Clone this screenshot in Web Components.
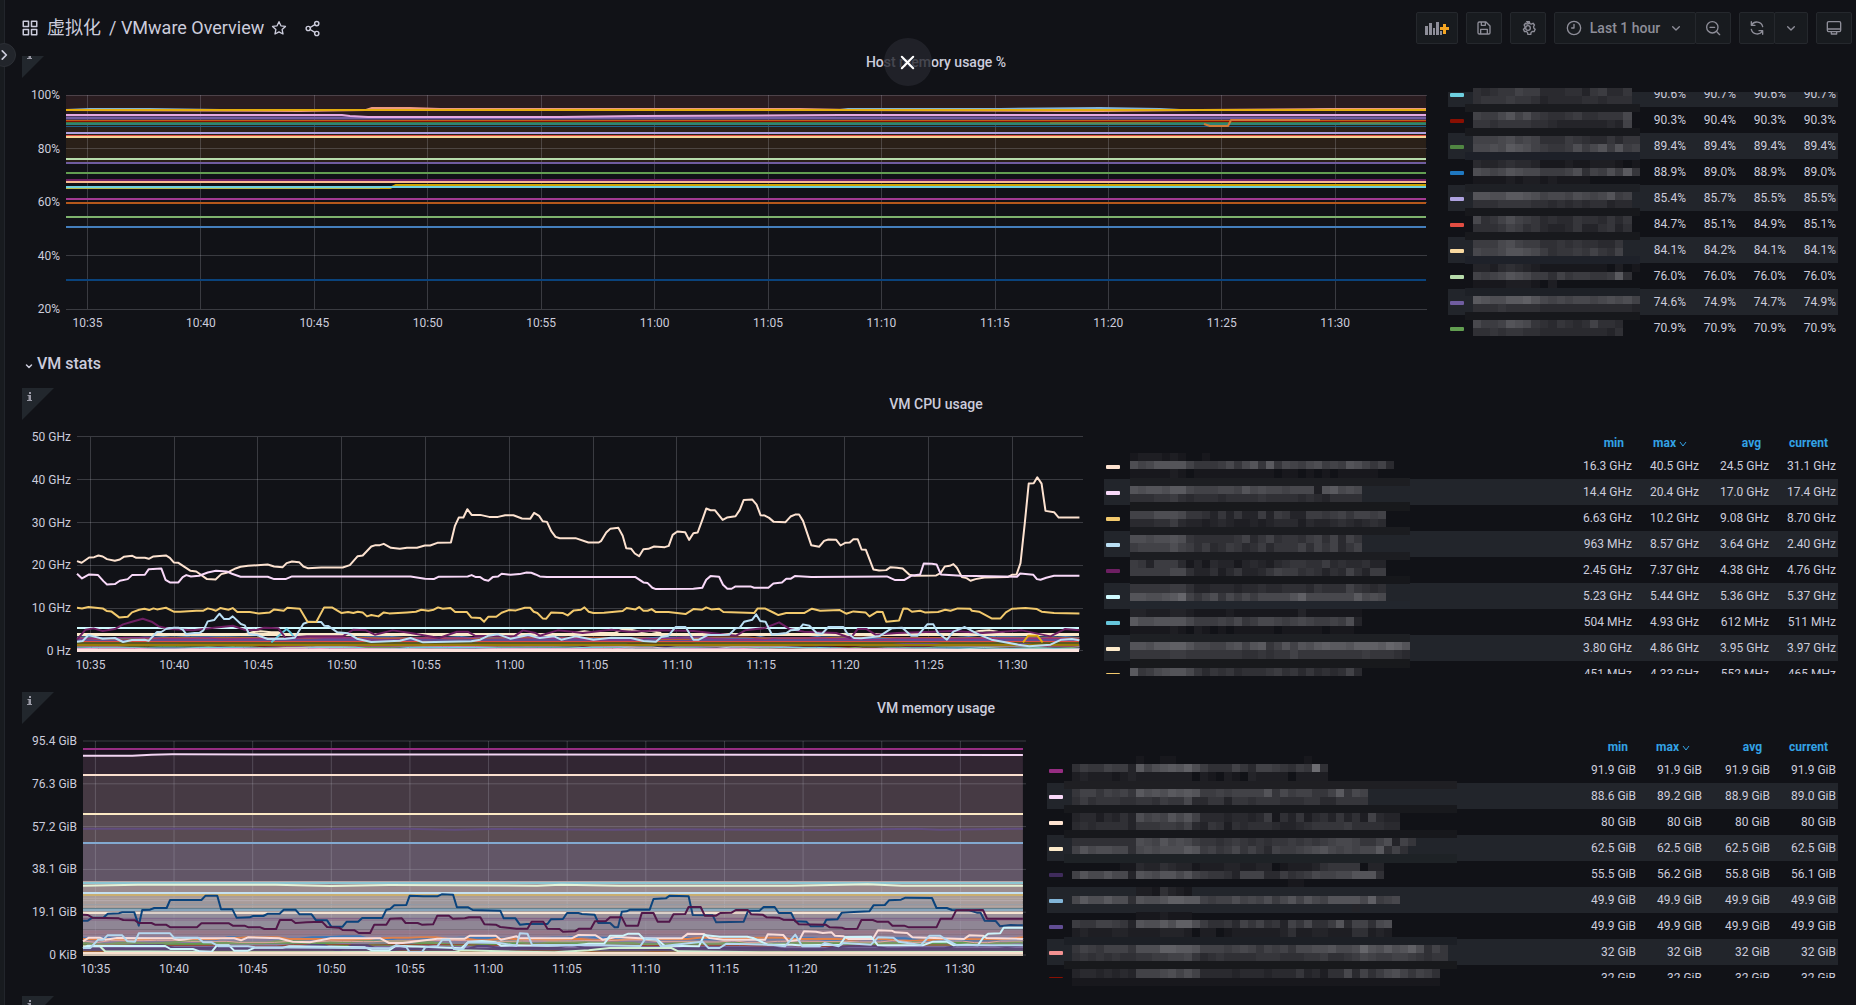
<!DOCTYPE html>
<html lang="zh">
<head>
<meta charset="utf-8">
<title>VMware Overview</title>
<style>
html, body { margin: 0; height: 100%; }
body { background: #111217; color: #ccccdc; font: 14px/20px Roboto, "Noto Sans CJK SC", sans-serif; overflow: hidden; }
</style>
</head>
<body>
<dash-app></dash-app>
<script>
const ICONS = {
  apps: '<path d="M3 3h7v7H3zM14 3h7v7h-7zM3 14h7v7H3zM14 14h7v7h-7z"/>',
  star: '<path d="M12 2.5l2.9 6.2 6.8.9-5 4.7 1.3 6.7-6-3.3-6 3.3 1.300-6.700-5-4.700 6.800-.900z"/>',
  share: '<circle cx="18" cy="5" r="3"/><circle cx="6" cy="12" r="3"/><circle cx="18" cy="19" r="3"/><path d="M8.700 10.600L15.300 6.500M8.700 13.400l6.600 4.100"/>',
  save: '<path d="M5 3h10l6 6v10a2 2 0 0 1-2 2H5a2 2 0 0 1-2-2V5a2 2 0 0 1 2-2zM8 3v5h6V3M7 21v-7h10v7"/>',
  cog: '<circle cx="12" cy="12" r="3.500"/><path d="M10 2.500h4l.7 2.800 2.400 1 2.500-1.400 2.100 2.600-1.400 2.500.5 2.300 2 1.500-1.700 3.600-2.800-.2-1.700 1.500-.4 2.800h-4.400l-.5-2.800-1.700-1.500-2.800.2-1.700-3.600 2-1.500.5-2.300-1.400-2.500 2.100-2.600 2.500 1.400 2.400-1z"/>',
  clock: '<circle cx="12" cy="12" r="10"/><path d="M12 6.500V12H8.500"/>',
  down: '<path d="M7 10l5 5 5-5"/>',
  zoomout: '<circle cx="11" cy="11" r="8.500"/><path d="M17 17l5 5M7.500 11h7"/>',
  sync: '<path d="M20.500 10A9 9 0 0 0 4 7.500M3.500 14A9 9 0 0 0 20 16.500M3.500 2.500v5.500H9M20.500 21.500V16H15"/>',
  monitor: '<path d="M4 2.500h16a2 2 0 0 1 2 2v11a2 2 0 0 1-2 2H4a2 2 0 0 1-2-2v-11a2 2 0 0 1 2-2zM2 13.500h20M8 17.500V21h8v-3.500"/>',
  right: '<path d="M9 5l7 7-7 7"/>',
  cross: '<path d="M4 4l16 16M20 4L4 20"/>'
};
class DashIcon extends HTMLElement {
  connectedCallback() {
    const s = this.getAttribute('size') || 16;
    this.attachShadow({ mode: 'open' }).innerHTML =
      `<style>:host{display:inline-flex;flex:none}svg{width:${s}px;height:${s}px;fill:none;stroke:currentColor;stroke-width:${this.getAttribute('weight') || 2};stroke-linejoin:round;stroke-linecap:round}</style>
       <svg viewBox="0 0 24 24" aria-hidden="true">${ICONS[this.getAttribute('name')]}</svg>`;
  }
}
customElements.define('dash-icon', DashIcon);

class ToolButton extends HTMLElement {
  connectedCallback() {
    this.attachShadow({ mode: 'open' }).innerHTML =
      `<style>:host{display:block;width:36px}
       button{box-sizing:border-box;height:32px;width:100%;display:flex;align-items:center;justify-content:center;gap:8px;padding:0;margin:0;background:#181b1f;border:1px solid #25282d;border-radius:2px;color:#8e8e99;font:500 14px/20px Roboto,sans-serif;white-space:nowrap}
       </style><button type="button" aria-label="${this.getAttribute('label')}"><slot></slot></button>`;
  }
}
customElements.define('tool-button', ToolButton);

class DashHeader extends HTMLElement {
  connectedCallback() {
    this.attachShadow({ mode: 'open' }).innerHTML = `
<style>
:host{display:flex;height:56px;box-sizing:border-box;padding:8px 4px 16px 16px;align-items:center;justify-content:space-between}
nav{display:flex;align-items:center;font-size:18px;line-height:24px;padding-top:8px}
nav a{color:inherit;text-decoration:none;margin-left:8px;white-space:pre}
nav button{display:flex;padding:0;margin:0 0 0 7px;background:none;border:0;color:inherit}
nav button + button{margin-left:17px}
.tools{display:flex;gap:8px;padding-top:8px}
.group{display:flex}
.group tool-button + tool-button{margin-left:-1px}
.add{width:42px}.range{width:142px}.drop{width:34px}
</style>
<nav>
  <dash-icon name="apps" size="18"></dash-icon>
  <a href="#folder">虚拟化</a><a href="#dashboard">/ VMware Overview</a>
  <button type="button" aria-label="Mark as favorite"><dash-icon name="star" size="16"></dash-icon></button>
  <button type="button" aria-label="Share dashboard"><dash-icon name="share" size="17"></dash-icon></button>
</nav>
<div class="tools">
  <tool-button class="add" label="Add panel"><svg width="26" height="16" viewBox="0 0 26 16"><g fill="#8e8e99"><path d="M1 6h3v9H1zM5 3h3v12H5zM9 8h2v7H9zM12 2h3v13h-3zM16 11h2v4h-2z"/></g><path d="M19 4h3v3h3v3h-3v4h-3v-4h-3V7h3z" fill="#f5a623"/></svg></tool-button>
  <tool-button label="Save dashboard"><dash-icon name="save"></dash-icon></tool-button>
  <tool-button label="Dashboard settings"><dash-icon name="cog"></dash-icon></tool-button>
  <div class="group">
    <tool-button class="range" label="Time range"><dash-icon name="clock"></dash-icon><span>Last 1 hour</span><dash-icon name="down" size="16"></dash-icon></tool-button>
    <tool-button label="Zoom out"><dash-icon name="zoomout"></dash-icon></tool-button>
  </div>
  <div class="group">
    <tool-button label="Refresh"><dash-icon name="sync"></dash-icon></tool-button>
    <tool-button class="drop" label="Refresh interval"><dash-icon name="down"></dash-icon></tool-button>
  </div>
  <tool-button label="Cycle view mode"><dash-icon name="monitor"></dash-icon></tool-button>
</div>`;
  }
}
customElements.define('dash-header', DashHeader);

/* ---------- chart data ---------- */
/* Each chart has its own drawing units (view). Points after "|" are counted from the seam. */
const TICKS = ['10:35','10:40','10:45','10:50','10:55','11:00','11:05','11:10','11:15','11:20','11:25','11:30'];
function parse(points, seam) {
  return points.split('|').flatMap((part, i) => part.trim().split(/\s+/).map(p => {
    const [x, y] = p.split(',').map(Number);
    return (x + i * seam) + ',' + y;
  })).join(' ');
}
/* small stepped random walk for the dense low-load series */
function walk(seed, x0, x1, base, amp, step) {
  let s = seed, out = [], y = base;
  const rnd = () => (s = (s * 16807) % 2147483647) / 2147483647;
  for (let x = x0; x < x1; x += step) {
    out.push(`${x},${Math.round(y)}`);
    const run = x + step * 3 * rnd();
    if (run < x1) out.push(`${Math.round(run)},${Math.round(y)}`);
    x = Math.max(x, run);
    y = base + (rnd() - .5) * 2 * amp * (rnd() > .3 ? 1 : .2);
  }
  out.push(`${x1},${Math.round(y)}`);
  return out.join(' ');
}
const flat = (c, y, w = 2) => ({ c, w, flat: y });
const CHARTS = {
  host: {
    view: [66, 95, 1361, 214], end: 1426, seam: 0, yw: 36, shift: 2.59, labels: ['100%','80%','60%','40%','20%'],
    grid: { x: 87.4, dx: 113.45, rows: 4 },
    bands: [[95, 122, '#2a1c20'], [122, 162, '#2a2018']],
    series: [
      { c: '#82b5d8', w: 2, p: '66,110 90,109 150,109 220,110 840,110 848,109 1000,109 1100,108 1160,109 1180,110 1310,110 1330,109 1426,110' },
      { c: '#ef9a80', w: 2, p: '66,110 300,111 366,110 372,108 410,108 440,109 800,109 850,110 1060,111 1100,111 1200,110 1340,109 1426,109' },
      flat('#e5ac0e', 110, 2),
      { c: '#705da0', w: 3, p: '66,118 1426,118' },
      { c: '#e5a8e2', w: 2, p: '66,115 342,115 350,116 368,117 560,117 640,116 840,115 1426,115' },
      flat('#890f02', 121), flat('#3f7a3a', 123), flat('#2f8376', 124), flat('#1f5f8a', 126, 1),
      flat('#c15c17', 120, 1),
      { c: '#8f8a3a', w: 1, p: '1050,123 1160,123' }, { c: '#8f8a3a', w: 1, p: '1340,123 1390,123' },
      { c: '#d07a38', w: 2, p: '1204,124 1210,126 1228,126 1231,120 1320,120' },
      flat('#aea2e0', 133), flat('#e24d42', 136), flat('#f4d598', 137), flat('#b7dbab', 159), flat('#705da0', 163),
      flat('#629e51', 173), flat('#6d1f62', 180), flat('#f9ba8f', 182),
      { c: '#b5b94a', w: 2, p: '66,188 380,188' },
      { c: '#cca300', w: 2, p: '380,188 390,188 396,185 1426,185' },
      flat('#6ed0e0', 187), flat('#a23a92', 199), flat('#b5581c', 203), flat('#7eb26d', 217), flat('#447ebc', 227), flat('#0a437c', 280)
    ]
  },
  cpu: {
    view: [216, 51, 2817, 643], end: 3023, seam: 1512, yw: 47, shift: 2.83, labels: ['50 GHz','40 GHz','30 GHz','20 GHz','10 GHz','0 Hz'],
    grid: { x: 253, dx: 234.7, rows: 5 },
    bands: [],
    series: [
      flat('#3f2b5b', 686, 3), flat('#2a5a72', 684, 2), flat('#4a7a38', 680, 2), flat('#9a7a0a', 674, 3), flat('#5a5a20', 670, 2),
      flat('#e24d42', 664, 2), flat('#614d93', 659, 4), flat('#7c3a8c', 656, 2), flat('#8a5a66', 652, 1),
      { c: '#447ebc', w: 1, walk: [11, 652, 5, 40] }, { c: '#bf5b2c', w: 1, walk: [37, 655, 4, 50] }, { c: '#962d82', w: 1, walk: [53, 656, 6, 45] },
      { c: '#614d93', w: 1, walk: [98, 677, 6, 42] }, { c: '#3f2b5b', w: 2, walk: [7, 681, 6, 35] }, { c: '#58140c', w: 2, walk: [21, 680, 5, 60] },
      { c: '#629e51', w: 1, walk: [87, 682, 4, 40] }, { c: '#bfe8c8', w: 1, walk: [303, 686, 4, 70] }, { c: '#6ed0e0', w: 1, walk: [61, 685, 3, 40] }, { c: '#d683ce', w: 1, walk: [77, 679, 3, 60] },
      { c: '#f4a0d0', w: 1, walk: [71, 687, 2, 60] },
      flat('#9a7a0a', 675, 2), flat('#fde4de', 691, 3),
      flat('#cffaff', 624), flat('#fceaca', 645, 3),
      { c: '#fceaca', w: 2, p: '680,645 705,638 730,635 760,638 780,638 800,646 | 90,640 125,635 160,640 210,640 230,630 255,630 285,637 310,633 340,640 | 1190,645 1230,634 1260,632 1285,637 1310,645' },
      { c: '#65c5db', w: 2, p: '760,668 790,640 803,628 815,640 825,655' },
      { c: '#e5ac0e', w: 2, p: '2865,668 2880,648 2905,648 2920,668' },
      { c: '#6d1f62', w: 2, p: '216,660 240,630 262,626 288,634 322,628 345,614 370,606 400,597 425,606 445,620 475,628 540,632 600,624 652,618 690,632 720,630 740,624 780,626 800,655 860,650 960,650 990,630 1025,632 1050,645 1100,632 1150,640 1230,655 1280,636 1310,636 1330,648 1440,650 1465,632 1500,640 | 0,648 50,632 90,636 120,640 200,630 250,636 340,632 430,634 480,640 550,648 575,632 630,625 670,608 700,628 740,636 830,640 870,655 890,628 915,628 940,645 1000,640 1100,636 1160,634 1240,640 1350,632 1430,650 1470,628 1511,632' },
      { c: '#badff4', w: 2, p: '216,666 232,664 248,646 262,650 288,657 322,655 345,667 370,661 405,660 417,663 440,637 452,637 465,628 487,624 500,624 512,630 522,643 545,640 558,640 570,632 582,605 600,601 615,582 628,598 642,598 652,590 675,613 686,617 698,643 720,646 750,658 800,657 826,654 850,612 865,606 900,607 908,618 920,619 945,638 975,641 1000,657 1040,667 1120,663 1150,655 1185,668 1320,665 1345,660 1368,648 1395,644 1430,657 1480,646 1500,652 | 0,655 40,650 60,660 100,650 150,660 200,654 255,655 290,664 325,666 340,652 360,648 380,622 408,622 430,660 445,660 470,646 530,645 548,626 560,624 572,606 595,600 606,584 617,604 632,606 650,645 690,640 702,632 725,630 737,614 755,618 775,640 790,642 808,622 850,622 860,640 880,655 900,656 950,650 985,626 1015,624 1040,648 1058,648 1085,614 1102,614 1115,640 1140,660 1158,636 1190,622 1230,645 1265,660 1340,675 1370,680 1430,675 1460,660 1490,658 1511,662' },
      { c: '#f2c96d', w: 2, p: '216,564 230,566 248,562 288,566 300,574 312,575 334,593 358,591 370,578 390,570 405,567 418,571 430,566 440,569 465,564 487,576 505,576 550,573 570,573 582,566 594,569 605,573 617,565 640,570 652,565 665,577 700,577 725,581 756,578 768,569 795,573 805,564 840,567 862,607 886,607 908,563 930,563 957,580 975,577 990,580 1002,576 1016,578 1028,590 1040,586 1060,590 1075,578 1090,581 1140,578 1165,576 1180,570 1200,573 1215,570 1227,563 1240,567 1262,565 1275,577 1308,577 1320,593 1345,595 1356,606 1368,591 1390,591 1405,579 1425,571 1445,572 1470,564 1485,564 1495,576 1505,580 | 8,596 18,597 32,578 65,580 78,587 95,572 115,570 125,563 137,576 150,580 180,579 232,574 243,565 268,569 278,562 290,573 302,573 313,568 325,577 360,577 408,583 430,568 455,570 466,563 480,569 502,567 514,577 600,580 610,566 630,566 655,579 668,586 690,580 740,580 762,567 785,573 840,571 858,582 878,575 912,578 923,590 945,576 960,577 970,606 1006,602 1018,566 1030,567 1042,576 1065,573 1078,578 1115,577 1135,570 1150,573 1170,566 1205,567 1210,573 1230,576 1265,596 1290,596 1305,578 1322,567 1360,565 1392,568 1405,576 1440,580 1511,581' },
      { c: '#fde2d0', w: 2, p: '216,424 229,429 250,413 264,412 276,407 288,410 300,418 322,423 336,419 347,411 371,408 382,414 406,414 417,417 430,410 465,407 476,414 487,428 500,429 534,453 550,455 580,478 604,479 620,463 635,459 660,446 674,441 695,438 750,434 768,440 792,442 803,430 818,425 838,427 850,440 862,445 900,443 960,443 980,436 1002,409 1016,407 1040,380 1052,376 1064,376 1075,372 1095,384 1120,387 1140,384 1168,384 1190,377 1205,377 1225,369 1263,368 1274,319 1285,293 1298,293 1309,268 1321,285 1345,285 1370,291 1395,291 1415,286 1438,286 1462,296 1485,297 1496,279 1510,288 | 8,304 20,306 32,334 44,351 56,355 100,355 136,368 165,368 172,363 186,338 197,327 220,324 232,348 242,385 256,387 266,401 278,409 290,388 304,387 320,380 350,382 361,378 372,345 385,335 407,337 418,360 430,340 442,338 455,300 466,266 478,271 490,271 512,300 524,293 548,289 560,270 571,240 595,239 607,254 618,286 630,287 642,294 655,306 688,307 702,290 715,284 726,284 737,303 760,376 782,381 796,363 808,359 830,360 842,377 855,369 868,368 878,358 890,358 901,389 913,390 934,449 950,452 970,451 982,442 1000,444 1016,446 1035,465 1050,468 1110,467 1122,460 1134,440 1148,438 1158,433 1168,444 1182,472 1195,475 1206,483 1220,478 1245,473 1310,472 1322,465 1335,464 1346,430 1358,310 1369,191 1383,190 1393,172 1405,191 1416,273 1440,277 1453,293 1511,293' },
      { c: '#f9d9f9', w: 2, p: '216,462 230,476 250,464 275,466 290,484 300,494 322,493 336,483 358,478 370,466 406,465 417,448 452,446 464,480 476,488 500,488 512,472 522,466 535,470 558,468 582,458 605,453 635,455 650,462 674,471 750,471 768,478 800,478 818,470 1150,470 1190,477 1215,478 1228,471 1310,470 1321,466 1333,472 1345,472 1356,480 1368,483 1380,472 1395,470 1405,462 1430,465 1455,463 1475,458 1488,459 1500,464 | 0,470 20,472 268,472 290,488 302,490 315,504 325,508 430,507 455,504 466,480 478,469 502,471 513,495 525,507 537,507 548,500 590,500 600,504 640,504 654,491 678,488 690,477 702,477 714,469 760,472 972,470 995,481 1020,481 1040,468 1065,464 1075,431 1098,432 1111,434 1123,464 1180,468 1336,471 1345,461 1382,465 1392,478 1402,480 1418,474 1440,468 1511,468' }
    ]
  },
  mem: {
    view: [241, 184, 2739, 642], end: 2971, seam: 1510, yw: 53, shift: 2.85, labels: ['95.4 GiB','76.3 GiB','57.2 GiB','38.1 GiB','19.1 GiB','0 KiB'],
    grid: { x: 277, dx: 228.4, rows: 5 },
    bands: [[207, 227, '#1b1420'], [227, 287, '#322633'], [287, 405, '#463a44'], [405, 489, '#594b53'], [489, 607, '#625667'], [607, 640, '#9b8b8e'],
      [640, 700, '#a99c99'], [700, 750, '#9c919a'], [750, 765, '#a28390'], [765, 826, '#9488a5']],
    series: [
      flat('#962d82', 207),
      { c: '#f4d5f4', w: 2, p: '241,228 384,228 440,225 500,224 2971,226' },
      flat('#fbe0cf', 286), flat('#fce9c4', 404),
      { c: '#614d7f', w: 2, p: '241,447 620,447 850,450 1000,447 1180,447 1320,450 1430,448 1780,450 1950,449 2400,451 2660,447 2730,450 2971,447' },
      flat('#82a9d0', 489),
      flat('#c5b3b0', 606, 1), flat('#8cc5d2', 609, 2), { c: '#e5f3d8', w: 2, p: '241,618 400,615 800,615 960,619 1130,616 1560,618 1630,615 1800,618 2300,618 2520,614 2620,618 2971,618' },
      flat('#c4dff0', 639, 2), flat('#c9ae70', 645, 2), flat('#b5aaa5', 656, 1), flat('#b8aeb0', 663, 1), flat('#989fa8', 675, 1),
      flat('#b3a6a2', 680, 1), flat('#64808c', 687, 2), flat('#8cabc0', 692, 2), flat('#f4e3d2', 699, 2), flat('#7f5b83', 716, 1), flat('#8c6484', 721, 1),
      flat('#ad7884', 757, 1), flat('#ae808a', 766, 1),
      { c: '#0a437c', w: 2, fill: 'rgba(110,130,160,.2)', p: '241,723 255,723 268,714 300,714 313,702 345,701 355,698 390,698 403,738 413,691 436,690 448,685 484,685 494,661 585,661 597,648 631,648 642,689 675,689 687,714 725,713 735,709 765,709 778,702 812,702 824,690 858,690 870,704 905,704 918,722 950,722 962,741 995,741 1007,726 1040,726 1052,715 1110,715 1122,690 1133,688 1145,677 1180,676 1190,648 1230,650 1270,650 1283,644 1316,645 1327,683 1360,683 1373,691 1453,693 1463,716 1497,716 1510,735 | 20,733 80,733 90,719 125,718 137,700 170,700 180,703 217,705 228,730 262,730 275,743 285,743 296,696 310,695 320,690 377,690 388,658 424,656 435,648 490,650 502,706 560,707 570,728 650,726 663,693 696,693 708,682 740,682 752,700 788,700 800,725 832,726 845,740 880,740 890,720 922,719 935,699 970,697 1015,695 1027,677 1060,676 1072,662 1107,660 1120,654 1197,655 1210,685 1240,685 1255,691 1305,692 1327,699 1338,699 1350,723 1382,724 1395,740 1425,736 1461,737' },
      { c: '#511749', w: 2, fill: 'rgba(120,80,110,.12)', p: '241,705 255,706 268,714 345,716 358,721 392,722 403,730 440,730 450,735 482,735 495,743 572,743 585,731 665,731 676,738 710,738 722,743 756,743 768,748 802,748 813,721 847,721 858,730 890,728 935,726 950,742 985,744 995,751 1030,752 1042,760 1075,760 1087,735 1122,735 1133,717 1167,716 1178,730 1213,730 1225,735 1258,734 1270,708 1304,708 1315,717 1350,716 1362,713 1395,713 1407,734 1440,735 1453,742 1500,747 | 22,747 34,726 68,726 80,747 115,748 125,756 160,755 172,747 206,747 218,725 250,724 262,713 296,713 308,738 343,738 354,700 388,700 400,726 434,726 446,704 480,703 490,682 525,682 537,708 570,708 582,700 615,699 627,691 662,691 672,704 705,705 717,713 752,714 765,720 797,721 810,734 888,735 900,743 935,744 945,748 980,747 992,721 1025,721 1037,726 1070,726 1082,738 1116,738 1130,743 1210,743 1222,717 1255,717 1267,692 1345,691 1357,717 1461,717' },
      flat('#5c4a78', 808, 3), flat('#7d6a9c', 801, 2), flat('#8a7a55', 815, 1),
      { c: '#3f78b8', w: 2, walk: [19, 776, 6, 38] }, { c: '#e0804a', w: 2, walk: [45, 778, 5, 34] },
      { c: '#629e51', w: 2, walk: [91, 792, 4, 40] }, { c: '#7a9a64', w: 2, walk: [29, 790, 6, 38] }, { c: '#994030', w: 1, walk: [63, 797, 3, 50] },
      { c: '#584477', w: 2, walk: [17, 804, 8, 34] }, { c: '#e5a8a0', w: 1, walk: [83, 784, 5, 36] }, { c: '#a06030', w: 1, walk: [41, 816, 2, 36] },
      { c: '#d0f0d0', w: 2, p: '241,800 290,800 305,815 560,816 580,818 880,818 1140,817 1320,817 1340,812 1500,816 | 100,818 200,812 260,805 440,805 460,815 700,818 1461,817' },
      { c: '#fadcd8', w: 2, p: '241,785 258,774 290,774 305,780 340,775 480,776 500,776 520,781 560,776 680,776 700,782 720,773 810,776 850,786 900,788 960,776 1105,776 1130,790 1170,790 1270,777 1350,777 1365,768 1440,768 1455,780 1500,770 | 0,776 150,776 170,766 220,767 240,780 280,772 350,776 470,776 488,762 535,763 550,775 590,780 712,780 720,764 765,766 780,785 812,780 825,755 860,756 880,760 905,758 915,768 940,770 955,778 1025,778 1040,752 1080,753 1090,758 1125,760 1140,773 1290,778 1305,767 1345,768 1355,775 1461,778' },
      { c: '#cdf4fb', w: 2, p: '241,806 255,798 480,799 495,808 560,808 580,815 615,816 630,797 665,797 680,813 720,813 740,804 820,804 840,800 1060,803 1080,812 1130,812 1150,798 1340,806 1360,787 1400,784 1440,788 1455,798 1500,797 | 80,798 160,797 200,792 245,792 262,768 300,768 315,762 345,762 360,778 400,780 420,798 520,800 535,766 580,771 660,771 680,776 720,795 790,795 810,797 930,795 945,772 1020,771 1040,797 1170,797 1200,786 1240,786 1260,797 1300,795 1330,797 1345,775 1360,762 1395,761 1405,744 1461,744' },
      { c: '#b5d8f0', w: 2, p: '241,805 262,805 285,780 300,780 312,767 355,767 370,785 392,786 403,761 494,761 505,774 575,774 590,788 615,788 635,800 690,800 720,800 740,803 1130,806 1150,797 1180,802 1190,818 1225,818 1235,803 1270,800 1285,780 1305,780 1318,808 1345,808 1360,788 1450,790 1500,798 | 0,761 22,762 35,795 240,797 350,799 365,776 395,778 410,800 530,786 548,805 580,805 600,792 715,795 730,795 770,800 800,765 820,800 870,800 885,790 925,800 940,790 1020,795 1040,773 1085,774 1100,786 1165,796 1190,768 1220,768 1235,778 1270,797 1461,797' },
      flat('#f8e0cf', 821, 2), flat('#cfc0b0', 825, 2)
    ]
  }
};
class TimeChart extends HTMLElement {
  connectedCallback() {
    const d = CHARTS[this.getAttribute('chart')], [vx, vy, vw, vh] = d.view;
    const bands = d.bands.map(([a, b, c]) => `<rect x="${vx}" y="${a}" width="${d.end - vx}" height="${b - a}" fill="${c}"/>`).join('');
    let grid = '';
    for (let i = 0; i <= d.grid.rows; i++) grid += `<path d="M${vx} ${vy + vh * i / d.grid.rows}h${vw}"/>`;
    for (let i = 0; i < 12; i++) grid += `<path d="M${d.grid.x + i * d.grid.dx} ${vy}v${vh}"/>`;
    const lines = d.series.map(s => {
      const pts = s.flat ? `${vx},${s.flat} ${d.end},${s.flat}` : s.walk ? walk(s.walk[0], vx, d.end, s.walk[1], s.walk[2], s.walk[3])
        : (s.p.split('|').length > 2 ? null : parse(s.p, d.seam));
      if (pts === null) return s.p.split('|').map((q, i) => `<polyline points="${parse(i ? '0,0|' + q : q, d.seam).replace(/^0,0 /, '')}" stroke="${s.c}" stroke-width="${s.w}"/>`).join('');
      const area = s.fill ? `<polygon points="${vx},${vy + vh} ${pts} ${d.end},${vy + vh}" fill="${s.fill}"/>` : '';
      return area + `<polyline points="${pts}" stroke="${s.c}" stroke-width="${s.w}"${s.flat ? ' shape-rendering="crispEdges"' : ''}/>`;
    }).join('');
    this.attachShadow({ mode: 'open' }).innerHTML = `
<style>
:host{display:grid;grid-template-columns:${d.yw}px minmax(0,1fr);flex:1;min-width:0;padding-top:17px;align-content:start;font-size:12px;line-height:18px}
.y{display:flex;flex-direction:column;justify-content:space-between;text-align:right;padding-right:6px;margin:-9px 0;white-space:nowrap}
svg{display:block;width:100%;height:214px;overflow:visible}
polyline{fill:none;stroke-linejoin:round;vector-effect:non-scaling-stroke}
.grid{stroke:rgba(204,204,220,.22);stroke-width:1;fill:none}
.grid path{vector-effect:non-scaling-stroke;shape-rendering:crispEdges}
.x{grid-column:2;display:flex;margin:5px ${d.shift}% 0 -${d.shift}%}
.x span{flex:1;text-align:center}
</style>
<div class="y">${d.labels.map(l => `<span>${l}</span>`).join('')}</div>
<svg viewBox="${d.view.join(' ')}" preserveAspectRatio="none" role="img" aria-label="${this.getAttribute('chart')} usage">${bands}<g class="grid">${grid}</g>${lines}</svg>
<div class="x">${TICKS.map(t => `<span>${t}</span>`).join('')}</div>`;
  }
}
customElements.define('time-chart', TimeChart);

/* ---------- legends ---------- */
/* masks: [top, height, cells] with one hex brightness digit for each cell, or [top, height, colour] for a full-width strip */
const LEGENDS = {
  host: {
    cols: [50, 50, 50, 50], offset: -11, stripe: 'odd', head: false,
    rows: [['#6ed0e0','90.6%','90.7%','90.6%','90.7%'],['#890f02','90.3%','90.4%','90.3%','90.3%'],['#508642','89.4%','89.4%','89.4%','89.4%'],['#1f78c1','88.9%','89.0%','88.9%','89.0%'],['#aea2e0','85.4%','85.7%','85.5%','85.5%'],['#e24d42','84.7%','85.1%','84.9%','85.1%'],['#f9d9a0','84.1%','84.2%','84.1%','84.1%'],['#b7dbab','76.0%','76.0%','76.0%','76.0%'],['#705da0','74.6%','74.9%','74.7%','74.9%'],['#629e51','70.9%','70.9%','70.9%','70.9%']],
    mask: { x: 25, cell: 8.35, strip: [17, 175], rows: [
      [-4,8,'5456687744455367446'],[4,8,'5666766534444554555'],[12,8,'#1a1b1f'],
      [20,8,'8779b8a765567556669'],[28,8,'6656666554333333438'],[36,8,'#18191d'],
      [44,8,'8889a898555765446466'],[52,8,'99a9cba87667a79b7b78'],[60,8,'#1d2028'],
      [68,8,'43345443111211222101'],[76,8,'a989ba997778a587a7c6'],[84,8,'11112122121111'],
      [92,8,'#1e2025'],[100,8,'bbaaccba8998a989b78'],[108,8,'5556666554545455344'],[116,8,'#17181c'],
      [124,8,'9568a8764544655464655'.slice(0,19)],[132,8,'5556875643346335635'],[140,8,'#18191d'],
      [148,8,'7779a8775565655446'],[156,8,'9889bba97566768658'],[164,8,'#1e2129'],
      [172,8,'33245432111111110201'],[180,8,'8789ba977586776 67c5'.replace(' ','')],[188,8,'1111222102'],
      [196,8,'#1d2026'],[204,8,'cbaaccdb98989989a9a8'],[212,8,'55565555444444444443'],[220,8,'#17181c'],
      [228,8,'9778ba965465458554'],[236,8,'556566554444444435']] }
  },
  cpu: {
    cols: [67, 67, 70, 67], offset: 0, stripe: 'even', head: true,
    rows: [['#fde2d0','16.3 GHz','40.5 GHz','24.5 GHz','31.1 GHz'],['#f9d9f9','14.4 GHz','20.4 GHz','17.0 GHz','17.4 GHz'],['#f2c96d','6.63 GHz','10.2 GHz','9.08 GHz','8.70 GHz'],['#badff4','963 MHz','8.57 GHz','3.64 GHz','2.40 GHz'],['#6d1f62','2.45 GHz','7.37 GHz','4.38 GHz','4.76 GHz'],['#cffaff','5.23 GHz','5.44 GHz','5.36 GHz','5.37 GHz'],['#65c5db','504 MHz','4.93 GHz','612 MHz','511 MHz'],['#fceaca','3.80 GHz','4.86 GHz','3.95 GHz','3.97 GHz'],['#f2c96d','451 MHz','4.33 GHz','552 MHz','465 MHz']],
    mask: { x: 26, cell: 8, strip: [26, 280], rows: [
      [19,8,'12221210010'],[27,8,'a89bbbb86667969b6c69879a787ba86ca'.slice(0,31)+'84'],[35,9,'1111121011111111110110101011111'],
      [44,8,'#1d1e22'],[52,8,'babbacc9888998b9a9989992b89988'.slice(0,25)+'c9a9'],[60,8,'55566754555455556555545435555'],[68,9,'#18191c'],
      [77,8,'888aaa96653636337376337767868878'],[85,8,'44455743323432232344424334543454'],[93,8,'#1b1c20'],
      [101,8,'aa9aaba6555556846856657858486'],[109,9,'78888a87574576457466685868468'],[118,8,'#1c1d21'],
      [126,8,'7637774131433134324566557454453 3'.replace(' ','')],[134,8,'7777799533524633468775653548537 7'.replace(' ','').slice(0,32)],[142,8,'#16171b'],
      [150,9,'66666775334443445445554655586545'],[159,8,'bbaabce868a697979999bd999999c9a9'],[167,8,'#22262d'],
      [175,8,'33222332111121111111131111111'],[183,9,'caabbbb97778796799878987787a3'],[192,8,'1111121021010111110111110111'],
      [200,8,'#1e2024'],[208,8,'bbaccddb9988ab8bc68b8bacdccbdddcedb9'.slice(0,35)],[216,9,'66666776666666556566866666666766654'],[225,9,'#18191c'],
      [234,8,'c679abb9646564555675646454584']] }
  },
  mem: {
    cols: [66, 66, 68, 66], offset: 0, stripe: 'even', head: true,
    rows: [['#962d82','91.9 GiB','91.9 GiB','91.9 GiB','91.9 GiB'],['#f9d9f9','88.6 GiB','89.2 GiB','88.9 GiB','89.0 GiB'],['#fde2d0','80 GiB','80 GiB','80 GiB','80 GiB'],['#fceaca','62.5 GiB','62.5 GiB','62.5 GiB','62.5 GiB'],['#3f2b5b','55.5 GiB','56.2 GiB','55.8 GiB','56.1 GiB'],['#82b5d8','49.9 GiB','49.9 GiB','49.9 GiB','49.9 GiB'],['#614d93','49.9 GiB','49.9 GiB','49.9 GiB','49.9 GiB'],['#f29191','32 GiB','32 GiB','32 GiB','32 GiB'],['#890f02','32 GiB','32 GiB','32 GiB','32 GiB']],
    mask: { x: 25, cell: 8, strip: [17, 393], rows: [
      [18,8,'........1..11................1'],[26,8,'57668773c8abcbda75558648876576f5'],[34,9,'23222123222222202102103222202222'],
      [43,8,'#1f1f23'],[51,8,'68868786cabacbcb77878888b69788668'.slice(0,33)+'c698'],[59,8,'5756665566576694466366566655566446666'],[67,8,'#18191d'],
      [75,9,'34424353a898b9b844434434715362453635284 33'.replace(' ','').slice(0,41)],[84,8,'45455553666776843652545554334566667555544'],[92,8,'#17181c'],
      [100,8,'55555555a98b9a976656765656676767899866789385'.slice(0,38)+'8a386'],[108,8,'8b9aa9959a9aaacb78679686487789ab98989988c58 4'.replace(' ','').slice(0,38)+'c5855'.slice(0,4)],[116,9,'#1e2226'],
      [125,8,'......114335433122233223301222356666033'.slice(0,39)],[133,8,'8b99b993ba9bb9b87665388844756798899bbb59 6'.replace(' ','').slice(0,39)],
      [141,8,'...........................11'],[149,9,'........2215321.'],[158,8,'9caacaa5baabddcc8788a898a79b8b98bbbb9d789ab'.slice(0,41)],
      [166,8,'...................................3'],[174,8,'........1112111'],[182,8,'76688763baacadda7556486856386955787958598'.slice(0,33)+'b48859a'],
      [190,9,'2322233222233320220122222235223322255232'],[199,8,'#1c1f25'],
      [207,8,'68768886aaaddccb88878986878699aab99aebacabdaa86'.slice(0,44)+'586'],[215,8,'56565655667788964565555666555667556798778876566'],[223,8,'#18191c'],
      [231,9,'344343438889a8a8444434443444634255948579a868756734'.slice(0,46)],[240,8,'1111111111111111111111111111111111111111111111']] }
  }
};
class ChartLegend extends HTMLElement {
  connectedCallback() {
    const d = LEGENDS[this.getAttribute('data')], m = d.mask;
    let cells = '';
    for (const [y, h, v] of m.rows) {
      if (v[0] === '#') { cells += `<rect x="${m.strip[0]}" y="${y + 4}" width="${m.strip[1]}" height="${h}" fill="${v}"/>`; continue; }
      [...v].forEach((ch, i) => {
        const n = parseInt(ch, 16);
        if (!n) return;
        const x = Math.round(i * m.cell), x2 = Math.round((i + 1) * m.cell), g = 18 + n * 6;
        cells += `<rect x="${m.x + x}" y="${y + 4}" width="${x2 - x}" height="${h}" fill="rgb(${g},${g},${g + 5})"/>`;
      });
    }
    const head = d.head ? `<thead><tr><th></th><th><button type="button">min</button></th><th><button type="button">max<svg width="8" height="8" viewBox="0 0 8 8"><path d="M1 2l3 4 3-4"/></svg></button></th><th><button type="button">avg</button></th><th><button type="button">current</button></th></tr></thead>` : '';
    this.attachShadow({ mode: 'open' }).innerHTML = `
<style>
:host{display:block;position:relative;margin-top:14px;font-size:12px;line-height:18px}
.clip{height:240px;overflow:hidden}
table{width:100%;table-layout:fixed;border-collapse:collapse;margin-top:${d.offset}px}
td,th{padding:0 2px 0 0;text-align:right;white-space:nowrap}
td{height:26px}
th{height:19px}
tbody tr:nth-child(${d.stripe}){background:#22252b}
td:first-child{text-align:left;padding-left:2px}
td i{display:block;width:14px;height:4px;border-radius:1px;margin-top:2px}
th button{background:none;border:0;padding:0;margin:0 8px 0 0;color:#33a2e5;font:700 12px/19px Roboto,sans-serif}
th svg{margin-left:3px;fill:none;stroke:currentColor;vertical-align:-1px}
th:nth-child(3) button{margin-right:12px}
.mask{position:absolute;left:0;top:-4px;width:100%;height:252px;overflow:visible;shape-rendering:crispEdges}
</style>
<div class="clip"><table><colgroup><col>${d.cols.map(w => `<col style="width:${w}px">`).join('')}</colgroup>${head}<tbody>
${d.rows.map(r => `<tr><td><i style="background:${r[0]}"></i></td>${r.slice(1).map(v => `<td>${v}</td>`).join('')}</tr>`).join('')}
</tbody></table></div>
<svg class="mask" aria-hidden="true">${cells}</svg>`;
  }
}
customElements.define('chart-legend', ChartLegend);

class DashPanel extends HTMLElement {
  connectedCallback() {
    this.attachShadow({ mode: 'open' }).innerHTML = `
<style>
:host{display:block;position:relative;height:296px;box-sizing:border-box;flex:none}
h2{margin:0;font:500 14px/32px Roboto,sans-serif;text-align:center;height:32px}
.body{display:flex;gap:21px;padding:0 12px 0 8px}
.info{position:absolute;left:0;top:0;width:32px;height:32px;padding:0;border:0;background:none}
.info svg{display:block}
::slotted(chart-legend){flex:0 1 var(--legend)}
</style>
<button class="info" type="button" aria-label="Panel information"><svg width="32" height="32"><path d="M0 0h32L0 32z" fill="#22272d"/><path d="M7 4h2v2H7zM6 7h3v5h1v1H5v-1h1.500V8H5.500V7z" fill="#9a9aa6"/></svg></button>
<h2>${this.getAttribute('heading')}</h2>
<div class="body"><slot></slot></div>`;
  }
}
customElements.define('dash-panel', DashPanel);

class DashRow extends HTMLElement {
  connectedCallback() {
    this.attachShadow({ mode: 'open' }).innerHTML = `
<style>:host{display:block;flex:none}
button{display:flex;align-items:center;gap:2px;height:30px;padding:0 0 2px 1px;margin:0;border:0;background:none;color:#ccccdc;font:500 16px/24px Roboto,sans-serif}
dash-icon{padding-top:3px}</style>
<button type="button" aria-expanded="true"><dash-icon name="down" size="12" weight="3"></dash-icon><slot></slot></button>`;
  }
}
customElements.define('dash-row', DashRow);

class DashApp extends HTMLElement {
  connectedCallback() {
    this.attachShadow({ mode: 'open' }).innerHTML = `
<style>
:host{display:flex;height:100vh;overflow:hidden}
aside{flex:none;width:4px;background:#181b1f;border-right:1px solid #22252b;position:relative}
.expand{position:absolute;left:-8px;top:43px;width:24px;height:24px;border-radius:50%;border:1px solid #2c2f35;background:#22252b;color:#ccccdc;display:flex;align-items:center;justify-content:center;padding:0}
.page{flex:1;min-width:0;display:flex;flex-direction:column;position:relative}
main{flex:1;min-height:0;overflow:hidden;display:flex;flex-direction:column;gap:8px;padding:0 6px 0 17px}
main > :first-child{margin-top:-10px}
.close{position:absolute;left:calc(50% - 47px);top:38px;width:48px;height:48px;border-radius:50%;border:0;padding:0;background:rgba(36,38,45,.8);color:#fff;display:flex;align-items:center;justify-content:center}
</style>
<aside><button class="expand" type="button" aria-label="Open navigation"><dash-icon name="right" size="14" weight="3"></dash-icon></button></aside>
<div class="page">
  <dash-header></dash-header>
  <main>
    <dash-panel heading="Host memory usage %" style="--legend:390px"><time-chart chart="host"></time-chart><chart-legend data="host"></chart-legend></dash-panel>
    <dash-row>VM stats</dash-row>
    <dash-panel heading="VM CPU usage" style="--legend:734px"><time-chart chart="cpu"></time-chart><chart-legend data="cpu"></chart-legend></dash-panel>
    <dash-panel heading="VM memory usage" style="--legend:791px"><time-chart chart="mem"></time-chart><chart-legend data="mem"></chart-legend></dash-panel>
    <dash-panel heading=""></dash-panel>
  </main>
  <button class="close" type="button" aria-label="Close"><dash-icon name="cross" size="17" weight="3"></dash-icon></button>
</div>`;
  }
}
customElements.define('dash-app', DashApp);
</script>
</body>
</html>
